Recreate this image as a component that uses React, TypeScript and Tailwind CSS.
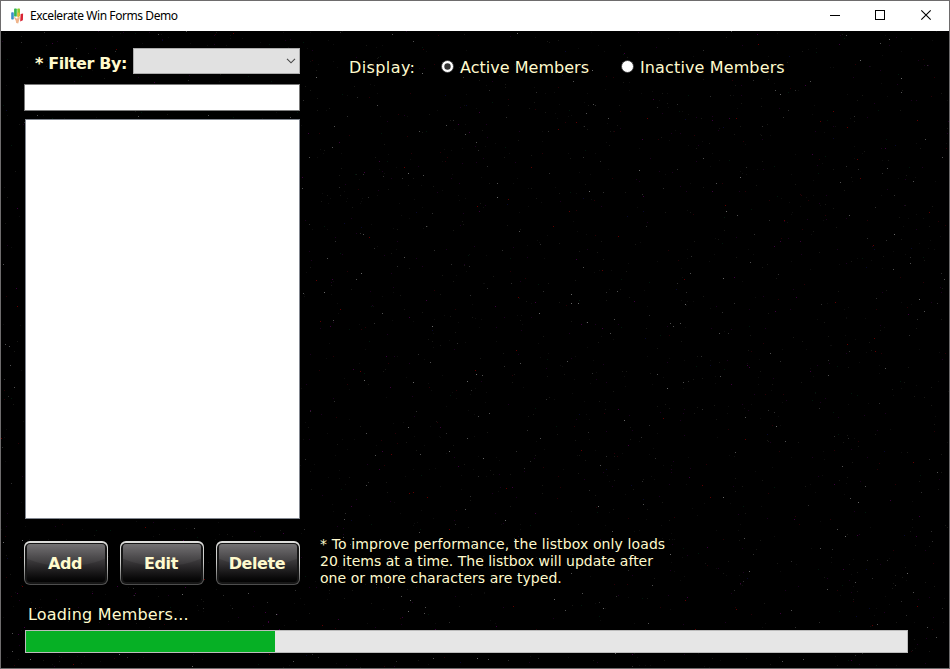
import React from "react";

const verdana = "font-['DejaVu_Sans',sans-serif] text-[#fffacd] whitespace-nowrap";

// Deterministic generator, so that the sky is the same on every render.
function makeStars() {
  let seed = 48271;
  const rnd = () => {
    seed = (seed * 16807) % 2147483647;
    return seed / 2147483647;
  };
  const layers: [string, number][] = [
    ["#0d0d0d", 900],
    ["#171714", 500],
    ["#1c0020", 420],
    ["#280006", 220],
    ["#00180c", 150],
    ["#08082c", 60],
    ["#3c003c", 150],
    ["#600000", 90],
    ["#2e2e2e", 260],
    ["#505050", 190],
    ["#686868", 80],
  ];
  return layers.map(([color, n]) => {
    let d = "";
    for (let i = 0; i < n; i++) {
      d += `M${Math.floor(rnd() * 948)} ${Math.floor(rnd() * 637)}h1v1h-1z`;
    }
    return { color, d };
  });
}

const stars = makeStars();

function Starfield() {
  return (
    <svg className="absolute inset-0" width="948" height="637" shapeRendering="crispEdges" aria-hidden="true">
      {stars.map((s) => (
        <path key={s.color} d={s.d} fill={s.color} />
      ))}
    </svg>
  );
}

function AppIcon() {
  return (
    <svg width="14" height="16" viewBox="0 0 14 16" aria-hidden="true">
      <rect x="0.2" y="4.2" width="2.6" height="7.4" rx="0.8" fill="#3b8ecb" />
      <rect x="3.1" y="0.6" width="2.7" height="8" rx="0.6" fill="#35b653" />
      <rect x="6.3" y="0.6" width="2.7" height="7.4" rx="0.6" fill="#8ccc2f" />
      <rect x="6.3" y="4.6" width="2.2" height="4.8" fill="#e8b53c" />
      <path d="M9.6 6l2.5-.4-.2 6.6-2.7 1.2z" fill="#d92332" />
      <path d="M2.6 9l1.8.4 1.4 1.4 2-1.6 1.2.4-1.1 3.4-.7 2.6-2-.6-.5-2.4z" fill="#efb48b" />
    </svg>
  );
}

function TitleBar() {
  return (
    <header className="flex h-[30px] items-center bg-white pl-[10px]">
      <AppIcon />
      <span className="ml-[5px] whitespace-nowrap font-['Noto_Sans',sans-serif] text-[12px] leading-[16px] tracking-[-0.42px] text-black">
        Excelerate Win Forms Demo
      </span>
      <div className="ml-auto flex">
        <svg width="138" height="30" viewBox="0 0 138 30" fill="none" stroke="#000" aria-hidden="true">
          <path d="M19 14.5h10M64.5 9.5h9v9h-9z" shapeRendering="crispEdges" />
          <path d="M110.3 9.3l9.4 9.4M119.7 9.3l-9.4 9.4" strokeWidth="1.1" />
        </svg>
      </div>
    </header>
  );
}

function GlossButton({ label }: { label: string }) {
  return (
    <button className="h-[44px] w-[84px] rounded-[6px] bg-linear-to-b from-[#dededc] via-[#c8c8c6] to-[#4b4b4b] p-[1px] pt-[2px]">
      <span className="block h-full w-full rounded-[5px] bg-[#161616] p-[2px] pt-[1px]">
        <span className="relative flex h-full w-full items-center justify-center overflow-hidden rounded-[3px] bg-linear-to-b from-[#6c6a6c] via-[#2f2d2f] via-55% to-[#030303]">
          <span className="absolute -top-[26px] -left-[15px] h-[48px] w-[108px] rounded-[50%] bg-white/5" />
          <span className={`${verdana} relative pt-[1px] pr-[2px] text-[16px] leading-[20px] font-bold tracking-[-0.4px]`}>
            {label}
          </span>
        </span>
      </span>
    </button>
  );
}

function Radio({ label, checked, tracking }: { label: string; checked: boolean; tracking: string }) {
  return (
    <label className="flex h-[20px] items-center">
      <svg className="mb-[3px]" width="13" height="13" viewBox="0 0 13 13" aria-hidden="true">
        <circle cx="6.5" cy="6.5" r="6" fill="#fff" stroke="#333" strokeWidth="0.8" />
        {checked && <circle cx="6.5" cy="6.5" r="3.2" fill="#333" />}
      </svg>
      <span className={`${verdana} ml-[6px] text-[16px] leading-[20px] ${tracking}`}>{label}</span>
    </label>
  );
}

export default function App() {
  return (
    <div className="relative flex h-[669px] w-[950px] flex-col overflow-hidden border border-[#6e6c6d] bg-black">
      <TitleBar />
      <main className="relative h-[637px] bg-black">
        <Starfield />
        <div className="relative flex h-[488px]">
          <section className="ml-[23px] flex w-[276px] flex-col pt-[17px]">
            <div className="flex h-[26px] items-center justify-between">
              <span className={`${verdana} ml-[11px] pt-[5px] text-[16px] leading-[20px] font-bold tracking-[-0.4px]`}>
                * Filter By:
              </span>
              <div className="flex h-[26px] w-[167px] items-center justify-end border border-[#adadad] bg-[#e1e1e1] pr-[3px]">
                <svg width="10" height="6" viewBox="0 0 10 6" fill="none" stroke="#484848" strokeWidth="1.1" aria-hidden="true">
                  <path d="M1 .8l4 4 4-4" />
                </svg>
              </div>
            </div>
            <div className="mt-[10px] h-[27px] border border-[#7a7a7a] bg-white" />
            <div className="mt-[8px] ml-px h-[400px] border border-[#828790] bg-white" />
          </section>
          <section className="ml-[49px] flex h-[20px] pt-[27px]">
            <span className={`${verdana} w-[92px] text-[16px] leading-[20px] tracking-[0.4px]`}>Display:</span>
            <div className="w-[180px]">
              <Radio label="Active Members" checked tracking="tracking-[0.02px]" />
            </div>
            <Radio label="Inactive Members" checked={false} tracking="tracking-[0.13px]" />
          </section>
        </div>
        <div className="relative mt-[22px] ml-[23px] flex h-[44px]">
          <div className="flex gap-[12px]">
            <GlossButton label="Add" />
            <GlossButton label="Edit" />
            <GlossButton label="Delete" />
          </div>
          <p className={`${verdana} -mt-[5px] ml-[20px] text-[14px] leading-[17px]`}>
            <span className="tracking-[0.11px]">* To improve performance, the listbox only loads</span>
            <br />
            20 items at a time. The listbox will update after
            <br />
            <span className="tracking-[0.04px]">one or more characters are typed.</span>
          </p>
        </div>
        <div className={`${verdana} relative mt-[20px] ml-[27px] h-[20px] text-[16px] leading-[20px] tracking-[0.18px]`}>
          Loading Members...
        </div>
        <div className="relative mt-[5px] ml-[24px] h-[23px] w-[883px] border border-[#bcbcbc] bg-[#e6e6e6]">
          <div className="h-full w-[249px] bg-[#06b025]" />
        </div>
      </main>
      <div className="absolute top-[511px] -left-px flex h-[24px] w-px flex-col">
        <span className="h-[8px] bg-[#79571c]" />
        <span className="h-[11px] bg-[#702022]" />
        <span className="h-[5px] bg-[#79571c]" />
      </div>
    </div>
  );
}
